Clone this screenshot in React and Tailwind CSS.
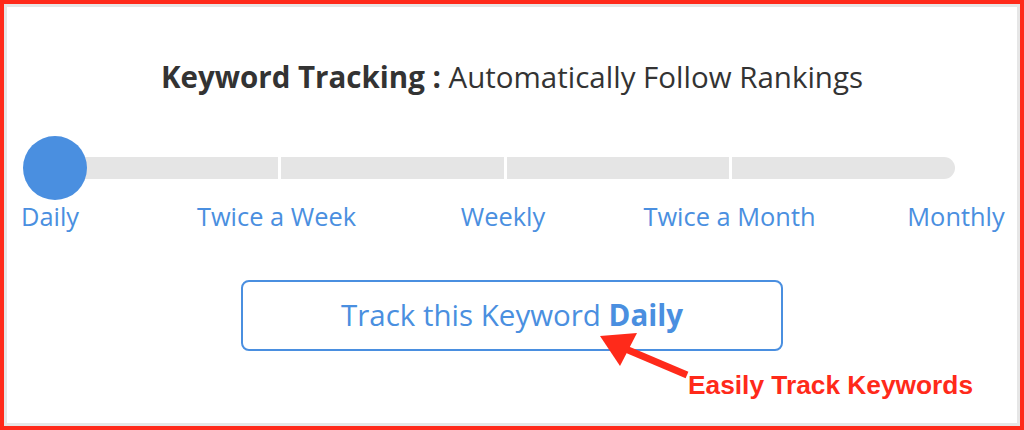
export default function App() {
  const labels = ["Daily", "Twice a Week", "Weekly", "Twice a Month", "Monthly"];

  return (
    <div className="w-[1024px] h-[430px] border-[4px] border-[#ff2a1a] bg-white">
      <div className="relative h-full w-full border-[3px] border-[#e6e6e6] flex flex-col" style={{ fontFamily: '"Open Sans", sans-serif' }}>
        {/* Title */}
        <h1 className="mt-[51px] text-center text-[29.5px] leading-[38px] text-[#333]">
          <span className="font-bold">Keyword Tracking :</span> Automatically Follow Rankings
        </h1>

        {/* Slider */}
        <div className="relative ml-[48px] mt-[61px] w-[900px] h-[22px] flex gap-[3px]">
          <div className="flex-1 bg-[#e5e5e5]" />
          <div className="flex-1 bg-[#e5e5e5]" />
          <div className="flex-1 bg-[#e5e5e5]" />
          <div className="flex-1 bg-[#e5e5e5] rounded-r-full" />
          <div className="absolute left-[-32px] top-[-21px] w-[64px] h-[64px] rounded-full bg-[#4a8fe0]" />
        </div>

        {/* Labels */}
        <div className="ml-[43px] mt-[22px] w-[906px] flex justify-between">
          {labels.map((l) => (
            <div key={l} className="w-0 flex justify-center">
              <span className="whitespace-nowrap text-[25.4px] leading-[30px] text-[#4a8fe0]">{l}</span>
            </div>
          ))}
        </div>

        {/* Button */}
        <div className="mt-[49px] flex justify-center">
          <button className="w-[542px] h-[71px] border-2 border-[#4a8fe0] rounded-[8px] text-[29.5px] text-[#4a8fe0] bg-white">
            Track this Keyword <span className="font-bold">Daily</span>
          </button>
        </div>

        {/* Annotation */}
        <svg className="absolute left-0 top-0" width="1017" height="423" viewBox="0 0 1017 423">
          <line x1="680" y1="368" x2="614" y2="340" stroke="#ff2a1a" strokeWidth="7" />
          <polygon points="593,329 630,326 613,359" fill="#ff2a1a" />
        </svg>
        <div
          className="absolute left-[681px] top-[363px] text-[26.3px] leading-[30px] font-bold text-[#ff2a1a]"
          style={{ fontFamily: '"Liberation Sans", Arial, sans-serif' }}
        >
          Easily Track Keywords
        </div>
      </div>
    </div>
  );
}
